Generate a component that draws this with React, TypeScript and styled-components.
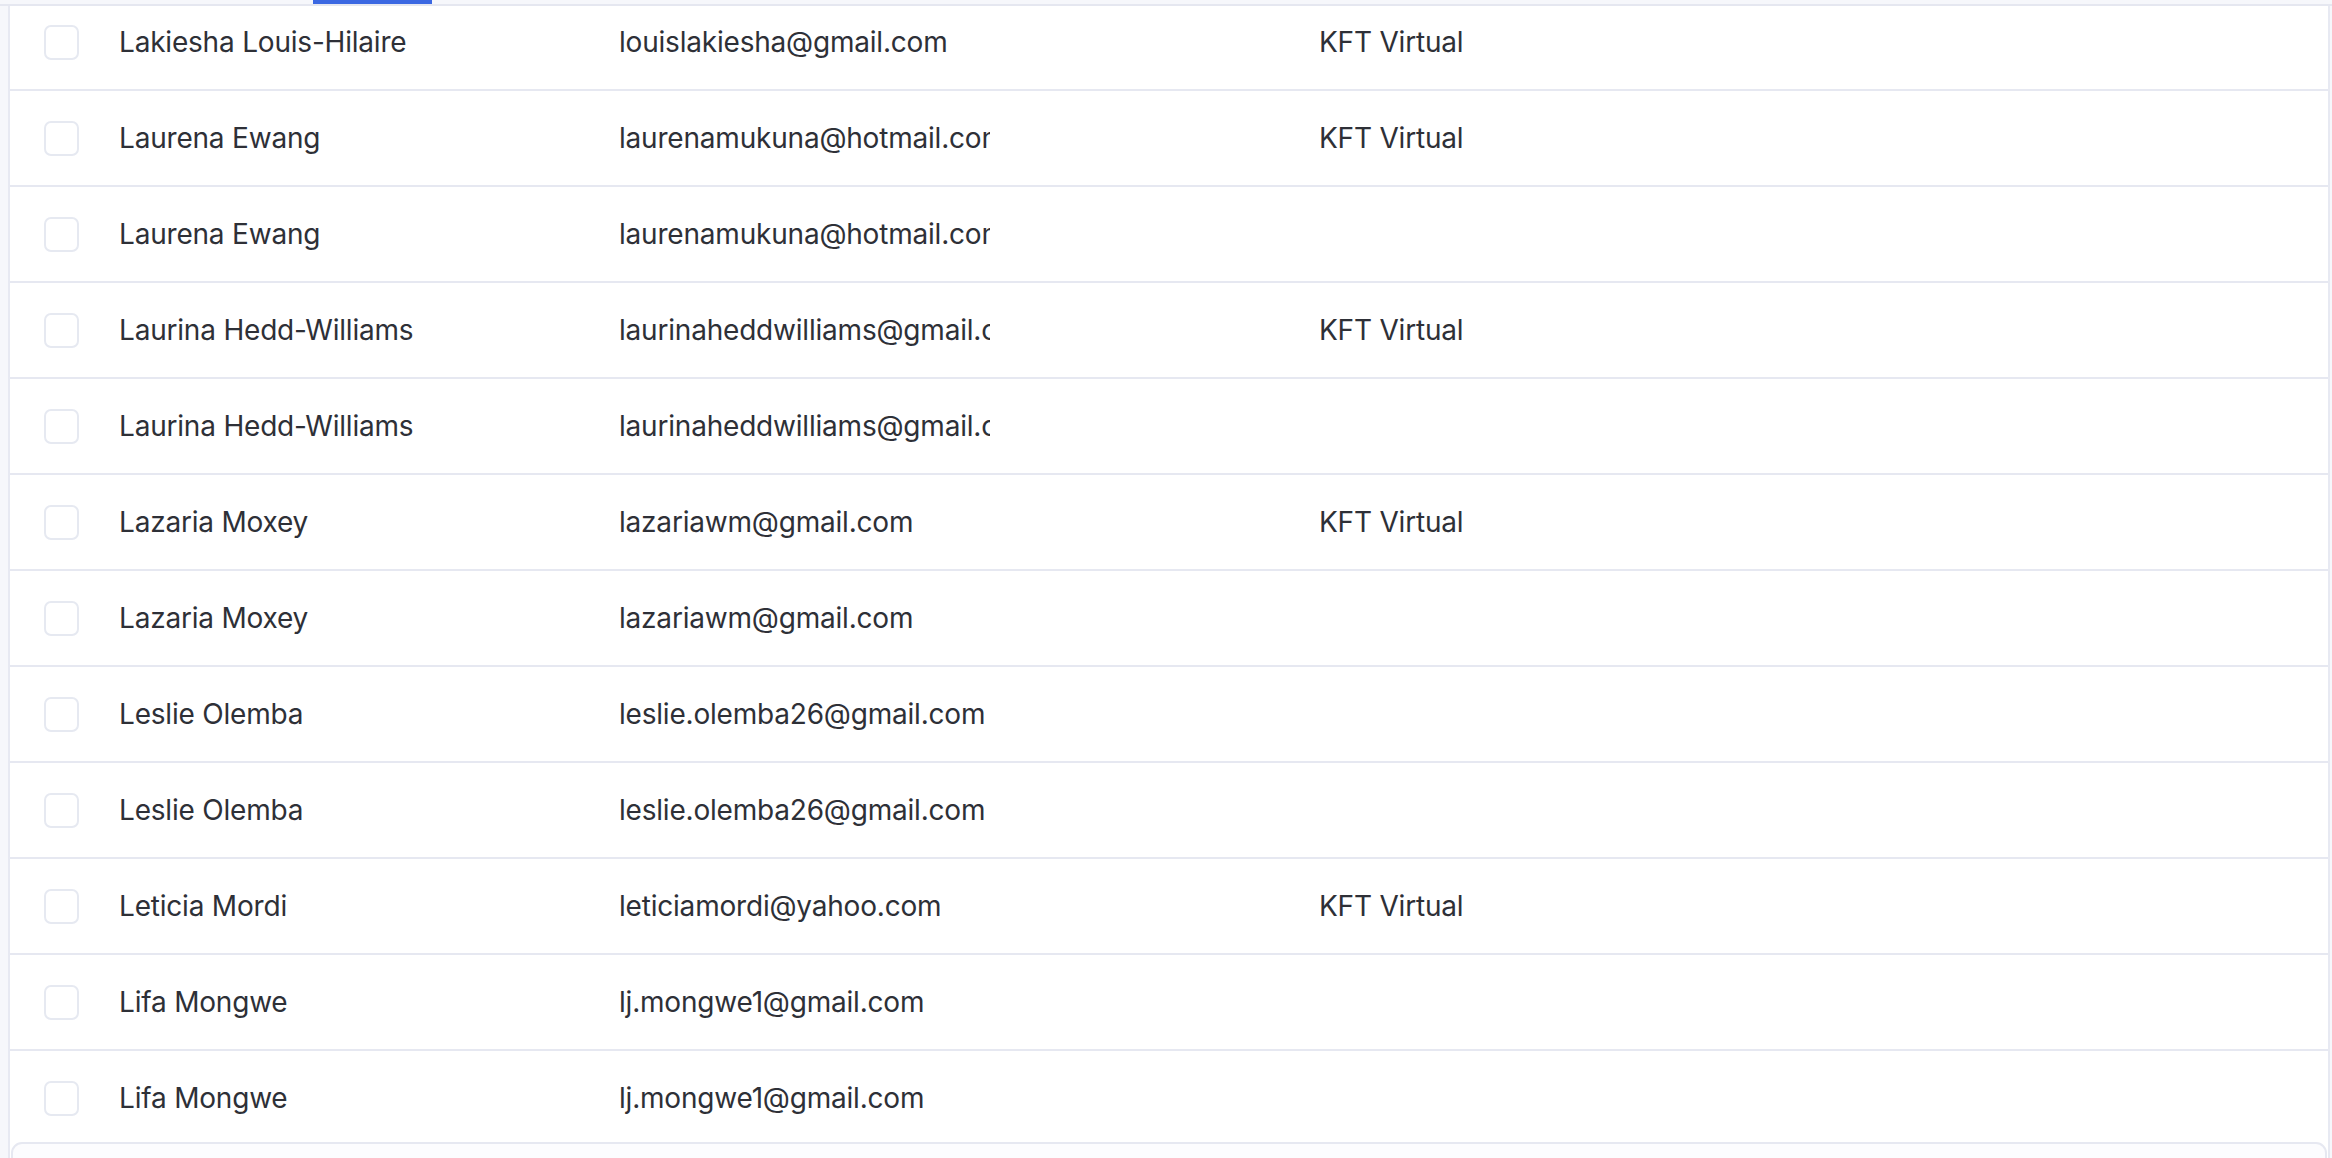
import React from "react";
import styled, { createGlobalStyle } from "styled-components";

const GlobalStyle = createGlobalStyle`
  html, body {
    margin: 0;
    padding: 0;
    background: #f6f7fb;
  }
  * { box-sizing: border-box; }
`;

const Page = styled.div`
  height: 100vh;
  overflow: hidden;
  display: flex;
  flex-direction: column;
  background: #f6f7fb;
  font-family: Inter, "Noto Sans", "Liberation Sans", sans-serif;
  color: #2e3037;
`;

const TabStrip = styled.div`
  flex-shrink: 0;
  height: 6px;
  border-bottom: 2px solid #e5e7f0;
  background: #f6f7fb;
  display: flex;
`;

const TabIndicator = styled.div`
  margin-left: 313px;
  width: 119px;
  height: 4px;
  background: #3b68e2;
`;

const Card = styled.div`
  flex: 1;
  min-height: 0;
  margin: 0 2px 0 8px;
  border-left: 2px solid #e7e9f2;
  border-right: 2px solid #e7e9f2;
  background: #ffffff;
  display: flex;
  flex-direction: column;
`;

const Viewport = styled.div`
  height: 1136px;
  flex-shrink: 0;
  overflow: hidden;
`;

const List = styled.div`
  margin-top: -11px;
`;

const Row = styled.div`
  display: grid;
  grid-template-columns: 85px 500px 395px 305px 1fr;
  align-items: center;
  height: 96px;
  border-bottom: 2px solid #e6e8f1;
`;

const CheckCell = styled.div`
  padding-left: 34px;
  display: flex;
  align-items: center;
`;

const Checkbox = styled.span`
  display: block;
  width: 35px;
  height: 35px;
  border: 2px solid #e6e9f1;
  border-radius: 7px;
  background: #ffffff;
`;

const Cell = styled.div<{ $clip?: boolean }>`
  padding: ${(p) => (p.$clip ? "0 0 0 24px" : "0 24px")};
  font-size: 28px;
  line-height: 40px;
  letter-spacing: -0.2px;
  white-space: nowrap;
  overflow: hidden;
  margin-top: -1px;
`;

const Footer = styled.div`
  flex-shrink: 0;
  height: 90px;
  margin: 0 1px;
  border: 2px solid #e6e8f1;
  border-radius: 11px 11px 0 0;
  background: #fcfcfe;
`;

type Person = { name: string; email: string; org?: string };

const people: Person[] = [
  { name: "Lakiesha Louis-Hilaire", email: "louislakiesha@gmail.com", org: "KFT Virtual" },
  { name: "Laurena Ewang", email: "laurenamukuna@hotmail.com", org: "KFT Virtual" },
  { name: "Laurena Ewang", email: "laurenamukuna@hotmail.com" },
  { name: "Laurina Hedd-Williams", email: "laurinaheddwilliams@gmail.com", org: "KFT Virtual" },
  { name: "Laurina Hedd-Williams", email: "laurinaheddwilliams@gmail.com" },
  { name: "Lazaria Moxey", email: "lazariawm@gmail.com", org: "KFT Virtual" },
  { name: "Lazaria Moxey", email: "lazariawm@gmail.com" },
  { name: "Leslie Olemba", email: "leslie.olemba26@gmail.com" },
  { name: "Leslie Olemba", email: "leslie.olemba26@gmail.com" },
  { name: "Leticia Mordi", email: "leticiamordi@yahoo.com", org: "KFT Virtual" },
  { name: "Lifa Mongwe", email: "lj.mongwe1@gmail.com" },
  { name: "Lifa Mongwe", email: "lj.mongwe1@gmail.com" },
];

export default function App() {
  return (
    <>
      <GlobalStyle />
      <Page>
        <TabStrip>
          <TabIndicator />
        </TabStrip>
        <Card>
          <Viewport>
            <List>
              {people.map((p, i) => (
                <Row key={i}>
                  <CheckCell>
                    <Checkbox />
                  </CheckCell>
                  <Cell>{p.name}</Cell>
                  <Cell $clip>{p.email}</Cell>
                  <Cell />
                  <Cell>{p.org ?? ""}</Cell>
                </Row>
              ))}
            </List>
          </Viewport>
          <Footer />
        </Card>
      </Page>
    </>
  );
}
